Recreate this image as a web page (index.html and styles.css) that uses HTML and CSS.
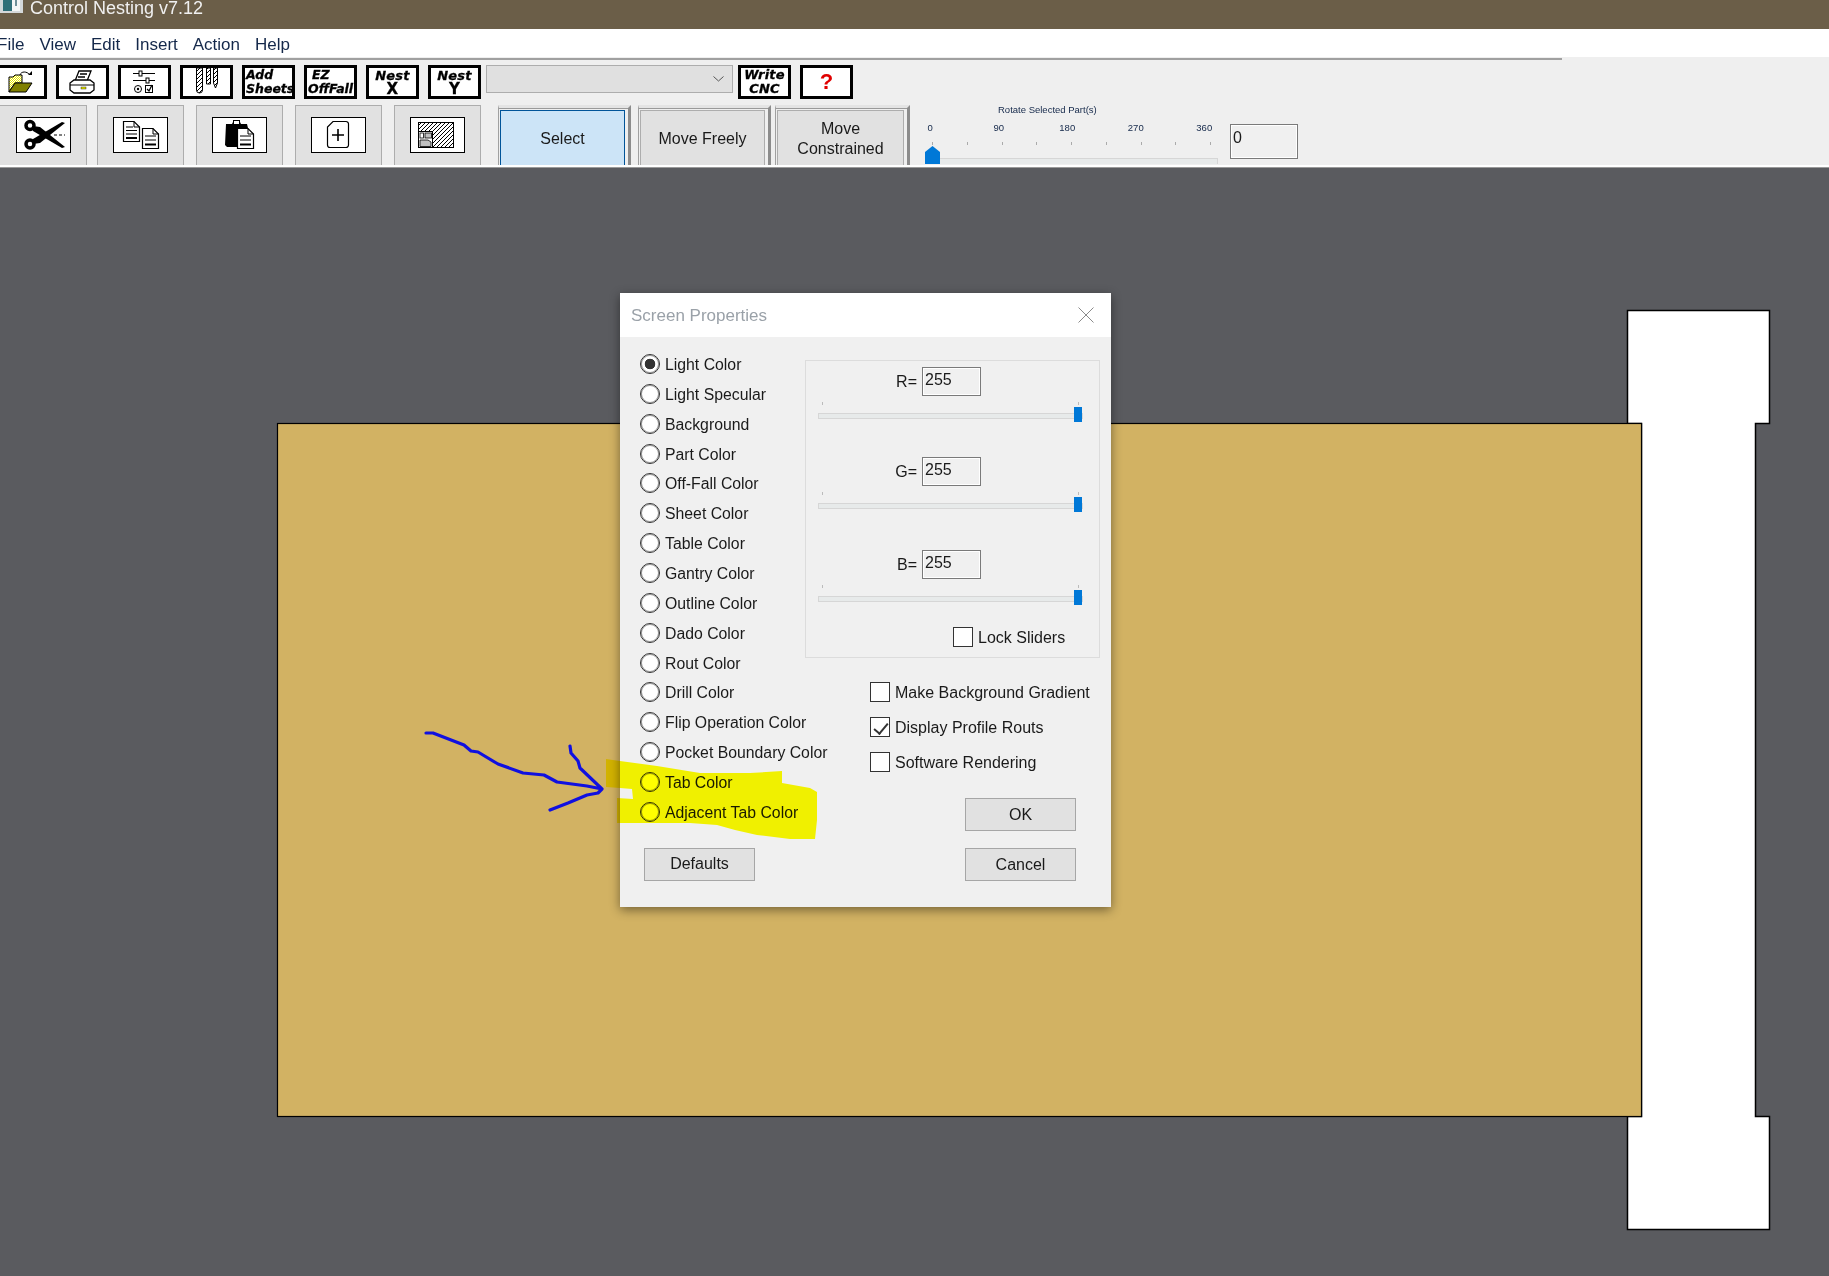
FILE: index.html
```html
<!DOCTYPE html>
<html lang="en">
<head>
    <meta charset="UTF-8">
    <meta name="viewport" content="width=device-width, initial-scale=1.0">
    <title>Control Nesting v7.12</title>
    <link rel="stylesheet" href="styles.css">
</head>
<body>
    <svg width="0" height="0" class="defs">
        <defs>
            <pattern id="hatch" width="4" height="4" patternUnits="userSpaceOnUse">
                <path d="M-1 1L1 -1M0 4L4 0M3 5L5 3" stroke="#000" stroke-width="1"/>
            </pattern>
            <pattern id="dither" width="2" height="2" patternUnits="userSpaceOnUse">
                <rect width="2" height="2" fill="#fff"/>
                <rect width="1" height="1" fill="#e8e800"/>
                <rect x="1" y="1" width="1" height="1" fill="#e8e800"/>
            </pattern>
        </defs>
    </svg>

    <div class="titlebar">
        <svg class="app-icon" width="23" height="14" viewBox="0 0 23 14">
            <rect x="0" y="-2" width="23" height="15" fill="#d4d8da"/>
            <rect x="3" y="0" width="9" height="11" fill="#2f6f78"/>
            <rect x="12" y="0" width="8" height="11" fill="#f4f6f6"/>
            <rect x="15" y="0" width="2" height="6" fill="#6f8f98"/>
        </svg>
        <span>Control Nesting v7.12</span>
    </div>

    <div class="menubar">
        <span>File</span>
        <span>View</span>
        <span>Edit</span>
        <span>Insert</span>
        <span>Action</span>
        <span>Help</span>
    </div>

    <div class="toolbar">
        <div class="toolbar-rule"></div>

        <div class="tool-row">
            <button class="tool-btn">
                <svg viewBox="-3 68 47 28" width="47" height="28">
                    <path d="M9 92V77H13L15 75H22V83H15L9 92Z" fill="url(#dither)" stroke="#000"/>
                    <path d="M15 83H32L26 92H9Z" fill="#808000" stroke="#000"/>
                    <path d="M20 75C21 71 27 71 30 75" fill="none" stroke="#000"/>
                    <path d="M28 75H32V71Z" fill="#000"/>
                </svg>
            </button>
            <button class="tool-btn">
                <svg viewBox="59 68 47 28" width="47" height="28">
                    <path d="M79 71H91L87 81H75Z" fill="#fff" stroke="#000" stroke-width="1.3"/>
                    <path d="M80 74H87M78 77H85" stroke="#000" stroke-width="1.3"/>
                    <path d="M74 80H90L94 83V90L90 93H74L70 90V83Z" fill="#fff" stroke="#000" stroke-width="1.3"/>
                    <path d="M70 85H94" stroke="#000"/>
                    <rect x="81" y="87" width="5" height="2" fill="#e8e800" stroke="#000" stroke-width=".4"/>
                </svg>
            </button>
            <button class="tool-btn">
                <svg viewBox="121 68 47 28" width="47" height="28">
                    <path d="M133 73.5H155M133 80.5H155" stroke="#000"/>
                    <rect x="139" y="71" width="3" height="5" fill="#fff" stroke="#000"/>
                    <rect x="146" y="78" width="3" height="5" fill="#fff" stroke="#000"/>
                    <circle cx="138" cy="89" r="3.5" fill="#fff" stroke="#000"/>
                    <circle cx="138" cy="89" r="1.2" fill="#000"/>
                    <rect x="145.5" y="85.5" width="7" height="7" fill="#fff" stroke="#000"/>
                    <path d="M147 89L149 91L152 85" fill="none" stroke="#000" stroke-width="1.3"/>
                </svg>
            </button>
            <button class="tool-btn">
                <svg viewBox="183 68 47 28" width="47" height="28">
                    <path d="M196.5 68V90A3 3 0 0 0 202.5 90V68Z" fill="url(#hatch)" stroke="#000"/>
                    <path d="M206.5 68V84H210.5V68Z" fill="url(#hatch)" stroke="#000"/>
                    <path d="M213.5 68V83L215.5 88L217.5 83V68Z" fill="url(#hatch)" stroke="#000"/>
                </svg>
            </button>
            <button class="tool-btn tool-text tool-left">
                <span>Add</span><span>Sheets</span>
            </button>
            <button class="tool-btn tool-text tool-left">
                <span class="ez-label">EZ</span><span>OffFall</span>
            </button>
            <button class="tool-btn tool-text">
                <span>Nest</span><span class="axis-label">X</span>
            </button>
            <button class="tool-btn tool-text">
                <span>Nest</span><span class="axis-label">Y</span>
            </button>

            <div class="combo">
                <svg width="11" height="6" viewBox="0 0 11 6">
                    <path d="M.5 .5L5.5 5L10.5 .5" fill="none" stroke="#555"/>
                </svg>
            </div>

            <button class="tool-btn tool-text">
                <span>Write</span><span>CNC</span>
            </button>
            <button class="tool-btn help-btn">?</button>
        </div>

        <div class="mode-row">
            <div class="panel">
                <div class="panel-icon">
                    <svg viewBox="17 118 53 34" width="53" height="34">
                        <circle cx="30" cy="125.5" r="4" fill="none" stroke="#000" stroke-width="3.5"/>
                        <circle cx="30" cy="144" r="4" fill="none" stroke="#000" stroke-width="3.5"/>
                        <path d="M33 126L40 127L65 147L62 148L33 131Z" fill="#000"/>
                        <path d="M33 144L40 143L65 123L62 122L33 139Z" fill="#000"/>
                        <path d="M53 135H65" stroke="#fff" stroke-width="1.5"/>
                        <path d="M54 135H65" stroke="#000" stroke-dasharray="3 2"/>
                    </svg>
                </div>
            </div>
            <div class="panel">
                <div class="panel-icon">
                    <svg viewBox="114 118 53 34" width="53" height="34">
                        <path d="M123.5 121.5H134L139.5 127V141.5H123.5Z" fill="#fff" stroke="#000" stroke-width="1.2"/>
                        <path d="M134 121.5V127H139.5" fill="none" stroke="#000"/>
                        <path d="M126 127H133M126 130.5H137M126 134H137" stroke="#000"/>
                        <path d="M126 138H137" stroke="#000" stroke-width="2"/>
                        <path d="M142.5 128.5H153L158.5 134V148.5H142.5Z" fill="#fff" stroke="#000" stroke-width="1.2"/>
                        <path d="M153 128.5V134H158.5" fill="none" stroke="#000"/>
                        <path d="M145 136H156M145 140H156" stroke="#000"/>
                        <path d="M145 144.5H156" stroke="#000" stroke-width="2"/>
                    </svg>
                </div>
            </div>
            <div class="panel">
                <div class="panel-icon">
                    <svg viewBox="213 118 53 34" width="53" height="34">
                        <path d="M226 124H232L234 120H239L241 124H247L248 128V147H227L225 145Z" fill="#000"/>
                        <rect x="233.5" y="120.5" width="6" height="4" fill="#fff" stroke="#000"/>
                        <path d="M237.5 128.5H248L253.5 134V148.5H237.5Z" fill="#fff" stroke="#000" stroke-width="1.2"/>
                        <path d="M248 128.5V134H253.5" fill="none" stroke="#000"/>
                        <path d="M240 136H251M240 140H251" stroke="#000"/>
                        <path d="M240 144.5H251" stroke="#000" stroke-width="2"/>
                    </svg>
                </div>
            </div>
            <div class="panel">
                <div class="panel-icon">
                    <svg viewBox="312 118 53 34" width="53" height="34">
                        <path d="M333 121.5H346A2.5 2.5 0 0 1 348.5 124V145A2.5 2.5 0 0 1 346 147.5H330A2.5 2.5 0 0 1 327.5 145V127Z" fill="#fff" stroke="#000" stroke-width="1.2"/>
                        <path d="M338 129V141M332 135H344" stroke="#000" stroke-width="1.6"/>
                    </svg>
                </div>
            </div>
            <div class="panel">
                <div class="panel-icon">
                    <svg viewBox="411 118 53 34" width="53" height="34">
                        <rect x="418.5" y="122.5" width="35" height="25" fill="url(#hatch)" stroke="#000"/>
                        <rect x="418.5" y="131.5" width="14" height="16" fill="#fff" stroke="#000"/>
                        <rect x="420" y="133" width="3.5" height="5" fill="#fff" stroke="#000" stroke-width=".8"/>
                        <rect x="425" y="133" width="6.5" height="5" fill="#c0c0c0" stroke="#000" stroke-width=".8"/>
                        <path d="M420 140H428L431 142V146.5H420Z" fill="#c0c0c0" stroke="#000" stroke-width=".8"/>
                    </svg>
                </div>
            </div>

            <div class="mode-frame mode-select">
                <button class="mode-btn active">Select</button>
            </div>
            <div class="mode-frame mode-free">
                <button class="mode-btn">Move Freely</button>
            </div>
            <div class="mode-frame mode-constrained">
                <button class="mode-btn">Move<br>Constrained</button>
            </div>

            <div class="rotate">
                <div class="rotate-title">Rotate Selected Part(s)</div>
                <div class="rotate-labels">
                    <span>0</span><span>90</span><span>180</span><span>270</span><span>360</span>
                </div>
                <div class="rotate-ticks">
                    <i></i><i></i><i></i><i></i><i></i><i></i><i></i><i></i><i></i>
                </div>
                <div class="rotate-track">
                    <svg class="rotate-thumb" width="15" height="18" viewBox="0 0 15 18">
                        <path d="M0 18V6L7.5 0L15 6V18Z" fill="#0078d7"/>
                    </svg>
                </div>
            </div>
            <input class="rotate-value" type="text" value="0">
        </div>
    </div>
    <div class="toolbar-edge"></div>

    <div class="workspace">
        <svg class="drawing" width="1829" height="1108" viewBox="0 168 1829 1108">
            <path d="M1627.5 310.5H1769.5V423.5H1755.5V1116.5H1769.5V1229.5H1627.5V1116.5H1641.5V423.5H1627.5Z" fill="#fff" stroke="#000" stroke-width="1.5"/>
            <rect x="277.5" y="423.5" width="1364" height="693" fill="#d2b263" stroke="#000" stroke-width="1.2"/>
        </svg>

        <div class="dialog">
            <div class="dialog-title">
                <span>Screen Properties</span>
                <svg width="16" height="16" viewBox="0 0 16 16">
                    <path d="M.5 .5L15.5 15.5M15.5 .5L.5 15.5" stroke="#8a8a8a" stroke-width="1"/>
                </svg>
            </div>
            <div class="dialog-body">
                <div class="radio-col">
                    <label class="radio"><input type="radio" name="prop" checked>Light Color</label>
                    <label class="radio"><input type="radio" name="prop">Light Specular</label>
                    <label class="radio"><input type="radio" name="prop">Background</label>
                    <label class="radio"><input type="radio" name="prop">Part Color</label>
                    <label class="radio"><input type="radio" name="prop">Off-Fall Color</label>
                    <label class="radio"><input type="radio" name="prop">Sheet Color</label>
                    <label class="radio"><input type="radio" name="prop">Table Color</label>
                    <label class="radio"><input type="radio" name="prop">Gantry Color</label>
                    <label class="radio"><input type="radio" name="prop">Outline Color</label>
                    <label class="radio"><input type="radio" name="prop">Dado Color</label>
                    <label class="radio"><input type="radio" name="prop">Rout Color</label>
                    <label class="radio"><input type="radio" name="prop">Drill Color</label>
                    <label class="radio"><input type="radio" name="prop">Flip Operation Color</label>
                    <label class="radio"><input type="radio" name="prop">Pocket Boundary Color</label>
                    <label class="radio"><input type="radio" name="prop">Tab Color</label>
                    <label class="radio"><input type="radio" name="prop">Adjacent Tab Color</label>
                    <button class="dlg-btn defaults-btn">Defaults</button>
                </div>

                <div class="right-col">
                    <div class="rgb-group">
                        <div class="rgb-block">
                            <div class="rgb-input"><span>R=</span><input type="text" value="255"></div>
                            <div class="rgb-slider"><i></i><i></i><div class="rgb-track"><b></b></div></div>
                        </div>
                        <div class="rgb-block">
                            <div class="rgb-input"><span>G=</span><input type="text" value="255"></div>
                            <div class="rgb-slider"><i></i><i></i><div class="rgb-track"><b></b></div></div>
                        </div>
                        <div class="rgb-block rgb-blue">
                            <div class="rgb-input"><span>B=</span><input type="text" value="255"></div>
                            <div class="rgb-slider"><i></i><i></i><div class="rgb-track"><b></b></div></div>
                        </div>
                        <label class="check lock-row"><input type="checkbox">Lock Sliders</label>
                    </div>

                    <div class="check-list">
                        <label class="check"><input type="checkbox">Make Background Gradient</label>
                        <label class="check"><input type="checkbox" checked>Display Profile Routs</label>
                        <label class="check"><input type="checkbox">Software Rendering</label>
                    </div>

                    <div class="dialog-actions">
                        <button class="dlg-btn">OK</button>
                        <button class="dlg-btn">Cancel</button>
                    </div>
                </div>
            </div>
        </div>

        <!-- hand drawn markup on top of the screenshot -->
        <svg class="markup" width="1829" height="1108" viewBox="0 168 1829 1108">
            <path class="marker" d="M606 759L620 761L657 766L700 773L750 773L782 771L782 783L810 788L817 792L817 820L815 839L790 839L757 835L735 830L717 825L690 823L650 823L617 823L617 798L633 799L632 789L620 788L606 787Z"/>
            <path class="pen" d="M426 733L433 733L464 745L471 751L478 752L498 764L523 773L544 775L557 782L587 786L602 789M570 746L571 753L578 761L580 768L602 789L598 793L587 795L568 803L550 810"/>
        </svg>
    </div>
</body>
</html>
```

FILE: styles.css
```css
* {
    box-sizing: border-box;
}
html, body {
    margin: 0;
    height: 1276px;
    overflow: hidden;
}
body {
    font-family: "Liberation Sans", Arial, sans-serif;
    font-size: 16px;
    color: #1a1a1a;
    background: #5a5b5f;
}
button, input {
    font-family: inherit;
    font-size: 16px;
    color: #1a1a1a;
    margin: 0;
}
.defs {
    display: block;
    height: 0;
}

/* window title */
.titlebar {
    height: 29px;
    background: #6b5e48;
    color: #f0f0f0;
    font-size: 18px;
    display: flex;
    gap: 7px;
    overflow: hidden;
}
.titlebar span {
    line-height: 18px;
    margin-top: -1px;
}
.app-icon {
    flex: none;
}

.menubar {
    height: 28px;
    background: #fff;
    font-size: 17px;
    display: flex;
    align-items: center;
    gap: 15px;
    padding-top: 4px;
    padding-left: 0;
    color: #14284a;
    text-indent: 0;
}
.menubar span:first-child {
    margin-left: -3px;
}

/* toolbars */
.toolbar {
    height: 108px;
    background: #efefef;
    padding-top: 1px;
}
.toolbar-rule {
    width: 1562px;
    height: 2px;
    background: #a0a0a0;
}
.toolbar-edge {
    height: 3px;
    background: #fff;
    border-bottom: 1px solid #9a9a9a;
}
.tool-row {
    display: flex;
    gap: 9px;
    margin: 5px 0 0 -6px;
    height: 34px;
}
.tool-btn {
    width: 53px;
    height: 34px;
    border: 3px solid #000;
    background: #fff;
    padding: 0;
    flex: none;
    display: flex;
}
.tool-text {
    flex-direction: column;
    align-items: center;
    justify-content: center;
    font-family: "DejaVu Sans", sans-serif;
    font-weight: bold;
    font-style: italic;
    font-size: 13px;
    line-height: 14px;
    letter-spacing: 0.2px;
    -webkit-text-stroke: 0.3px #000;
    color: #000;
}
.tool-left {
    align-items: flex-start;
    padding-left: 1px;
    font-size: 12.5px;
    letter-spacing: 0;
}
.ez-label {
    padding-left: 4px;
}
.axis-label {
    font-style: normal;
    font-size: 15px;
    line-height: 13px;
}
.help-btn {
    align-items: center;
    justify-content: center;
    color: #e00000;
    font-weight: bold;
    font-size: 22px;
}
.combo {
    width: 247px;
    height: 28px;
    margin-left: -4px;
    margin-right: -4px;
    background: #e0e0e0;
    border: 1px solid #adadad;
    display: flex;
    align-items: center;
    justify-content: flex-end;
    padding-right: 8px;
}

.mode-row {
    display: flex;
    height: 60px;
    margin: 6px 0 0 -2px;
    overflow: hidden;
}
.panel {
    width: 87px;
    height: 60px;
    margin-right: 12px;
    background: #e1e1e1;
    border: 1px solid #adadad;
    border-bottom: none;
    padding-top: 11px;
    display: flex;
    justify-content: center;
    flex: none;
}
.panel:first-child {
    width: 89px;
    margin-right: 10px;
    padding-left: 2px;
}
.panel-icon {
    width: 55px;
    height: 36px;
    background: #fff;
    border: 1px solid #000;
}
.panel-icon svg, .tool-btn svg {
    display: block;
}

.mode-frame {
    height: 60px;
    flex: none;
    border-top: 3px solid #e4e4e4;
    border-left: 1px solid #a0a0a0;
    border-right: 3px solid #8c8c8c;
    padding: 2px 3px 0 1px;
    box-shadow: inset 0 1px 0 #9a9a9a;
}
.mode-select {
    margin-left: 5px;
    width: 133px;
}
.mode-free {
    margin-left: 7px;
    width: 133px;
}
.mode-constrained {
    margin-left: 4px;
    width: 135px;
}
.mode-btn {
    width: 100%;
    height: 60px;
    background: #e1e1e1;
    border: 1px solid #adadad;
    border-bottom: none;
    line-height: 20px;
    padding: 0 0 4px;
}
.mode-btn.active {
    background: #cce4f7;
    border-color: #005499;
}

.rotate {
    width: 293px;
    margin-left: 15px;
    flex: none;
    font-size: 9.5px;
    color: #14284a;
}
.rotate-title {
    margin: -1px 0 0 73px;
    height: 11px;
    line-height: 11px;
}
.rotate-labels {
    display: flex;
    margin: 7px 0 0 -29px;
    height: 11px;
    line-height: 11px;
}
.rotate-labels span {
    width: 68.5px;
    flex: none;
    text-align: center;
}
.rotate-ticks {
    display: flex;
    justify-content: space-between;
    width: 279px;
    height: 3px;
    margin: 9px 0 0 7px;
}
.rotate-ticks i {
    width: 1px;
    background: #aaa;
}
.rotate-track {
    position: relative;
    height: 6px;
    margin-top: 13px;
    background: #e7eaea;
    border: 1px solid #d6d6d6;
    border-bottom: none;
}
.rotate-thumb {
    position: absolute;
    left: -1px;
    bottom: 0;
    display: block;
}
.rotate-value {
    width: 68px;
    height: 35px;
    margin: 19px 0 0 12px;
    padding: 0 0 8px 2px;
    border: 1px solid #7a7a7a;
    background: #f0f0f0;
    box-shadow: inset 0 0 0 1px #fff;
    outline: none;
    flex: none;
}

/* canvas */
.workspace {
    position: relative;
    height: 1108px;
    background: #5a5b5f;
}
.drawing, .markup {
    position: absolute;
    left: 0;
    top: 0;
    display: block;
}
.markup {
    pointer-events: none;
}
.marker {
    fill: #ffff00;
    mix-blend-mode: multiply;
}
.pen {
    fill: none;
    stroke: #1010e0;
    stroke-width: 3.2;
    stroke-linecap: round;
    stroke-linejoin: round;
}

/* dialog */
.dialog {
    position: absolute;
    left: 620px;
    top: 125px;
    width: 491px;
    height: 614px;
    background: #f0f0f0;
    box-shadow: 0 3px 10px rgba(0, 0, 0, 0.45);
}
.dialog-title {
    height: 44px;
    background: #fff;
    color: #9aa1a8;
    font-size: 17px;
    display: flex;
    align-items: center;
    justify-content: space-between;
    padding: 2px 17px 0 11px;
}
.dialog-title svg {
    margin-top: -2px;
}
.dialog-body {
    display: flex;
    padding: 12px 0 0 20px;
}
.radio-col {
    width: 165px;
    flex: none;
}
.radio {
    display: flex;
    align-items: center;
    gap: 5px;
    height: 29.87px;
    padding-top: 2px;
    font-size: 15.8px;
    white-space: nowrap;
}
.radio input {
    appearance: none;
    width: 20px;
    height: 20px;
    margin: -2px 0 0;
    flex: none;
    border-radius: 50%;
    border: 1px solid #333;
    box-shadow: inset 0 0 0 1px #999;
    background: #fff;
}
.radio input:checked {
    background: radial-gradient(circle, #333 0, #333 5px, #fff 5.6px);
}
.check {
    display: flex;
    align-items: center;
    gap: 5px;
    height: 20px;
    padding-top: 1px;
    white-space: nowrap;
}
.check input {
    appearance: none;
    width: 20px;
    height: 20px;
    margin: -1px 0 0;
    flex: none;
    border: 1px solid #333;
    background: #fff;
    position: relative;
}
.check input:checked::after {
    content: "";
    position: absolute;
    left: 6px;
    top: 2px;
    width: 6px;
    height: 12px;
    border: solid #333;
    border-width: 0 2px 2px 0;
    transform: rotate(40deg);
}

.right-col {
    width: 295px;
    margin-top: 11px;
    flex: none;
}
.rgb-group {
    height: 298px;
    border: 1px solid #dcdcdc;
    padding-top: 6px;
}
.rgb-block + .rgb-block {
    margin-top: 38px;
}
.rgb-block.rgb-blue {
    margin-top: 41px;
}
.rgb-input {
    display: flex;
    justify-content: flex-end;
    align-items: center;
    gap: 5px;
    width: 175px;
    height: 29px;
}
.rgb-input input {
    width: 59px;
    height: 29px;
    padding: 0 0 3px 2px;
    border: 1px solid #7a7a7a;
    background: #f0f0f0;
    box-shadow: inset 0 0 0 1px #fff;
    outline: none;
}
.rgb-slider {
    position: relative;
    height: 17px;
    margin: 6px 0 0 12px;
    width: 265px;
}
.rgb-slider i {
    position: absolute;
    top: 0;
    left: 4px;
    width: 1px;
    height: 3px;
    background: #bbb;
}
.rgb-slider i + i {
    left: 260px;
}
.rgb-track {
    position: absolute;
    top: 11px;
    left: 0;
    right: 0;
    height: 6px;
    background: #e7eaea;
    border: 1px solid #d6d6d6;
}
.rgb-track b {
    position: absolute;
    left: 255px;
    top: -7px;
    width: 8px;
    height: 15px;
    background: #0078d7;
}
.lock-row {
    margin: 25px 0 0 147px;
}
.check-list {
    margin: 24px 0 0 65px;
    display: flex;
    flex-direction: column;
    gap: 15px;
}
.dialog-actions {
    margin: 26px 0 0 160px;
    display: flex;
    flex-direction: column;
    gap: 17px;
}
.dlg-btn {
    width: 111px;
    height: 33px;
    background: #e1e1e1;
    border: 1px solid #a6a6a6;
    padding: 0;
}
.defaults-btn {
    margin: 21.08px 0 0 4px;
}
```
